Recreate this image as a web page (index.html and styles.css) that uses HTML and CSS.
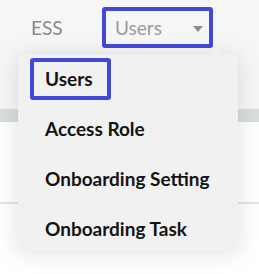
FILE: index.html
```html
<!DOCTYPE html>
<html>
<head>
<meta charset="utf-8">
<link rel="stylesheet" href="styles.css">
</head>
<body>
<div class="page">
  <header class="topbar">
    <span class="tab">ESS</span>
    <span class="tab tab-active">
      <span class="tab-label">Users</span>
      <span class="caret"></span>
    </span>
  </header>
  <div class="band"></div>
  <main class="content">
    <div class="rule"></div>
  </main>
  <nav class="menu">
    <span class="menu-arrow"></span>
    <a class="menu-item menu-item-active">Users</a>
    <a class="menu-item">Access Role</a>
    <a class="menu-item">Onboarding Setting</a>
    <a class="menu-item">Onboarding Task</a>
  </nav>
</div>
</body>
</html>
```

FILE: styles.css
```css
html, body {
  margin: 0;
  padding: 0;
  background: #ffffff;
}
body {
  font-family: Lato, "Open Sans", sans-serif;
}
.page {
  position: relative;
  width: 259px;
  height: 274px;
  overflow: hidden;
}
.topbar {
  box-sizing: border-box;
  height: 109px;
  background: #f6f6f6;
  display: flex;
  align-items: flex-start;
  padding: 7px 0 0 31px;
}
.tab {
  font-size: 19px;
  color: #8a8a8a;
  line-height: 41px;
  height: 41px;
  width: 71px;
}
.tab-active {
  box-sizing: border-box;
  display: flex;
  align-items: center;
  width: 111px;
  height: 41px;
  border: 4px solid #4349d6;
  border-radius: 3px;
  padding: 0 6px 0 9px;
  color: #9b9b9b;
}
.tab-label {
  flex: 1;
  line-height: 33px;
}
.caret {
  width: 0;
  height: 0;
  border-left: 5.5px solid transparent;
  border-right: 5.5px solid transparent;
  border-top: 6px solid #8c8c8c;
  margin-top: 2px;
}
.band {
  height: 13px;
  background: #d9dddd;
}
.content {
  padding-top: 80px;
}
.rule {
  height: 2px;
  background: #e6e6e6;
}
.menu {
  position: absolute;
  left: 18px;
  top: 55px;
  width: 220px;
  box-sizing: border-box;
  height: 196px;
  padding: 12px 0 11px;
  background: #f1f1f1;
  box-shadow: 0 2px 22px rgba(0, 0, 0, 0.13);
  display: flex;
  flex-direction: column;
  gap: 27px;
}
.menu-arrow {
  position: absolute;
  top: -7px;
  left: 190px;
  width: 0;
  height: 0;
  border-left: 7px solid transparent;
  border-right: 7px solid transparent;
  border-bottom: 7px solid #f1f1f1;
}
.menu-item {
  display: block;
  font-size: 19px;
  font-weight: 700;
  line-height: 23px;
  color: #141414;
  padding-left: 27px;
  white-space: nowrap;
}
.menu-item-active {
  box-sizing: border-box;
  align-self: flex-start;
  width: 81px;
  margin: -9px 0 -10px 12px;
  padding: 5px 0 6px 11px;
  border: 4px solid #4349d6;
  border-radius: 3px;
}
```
